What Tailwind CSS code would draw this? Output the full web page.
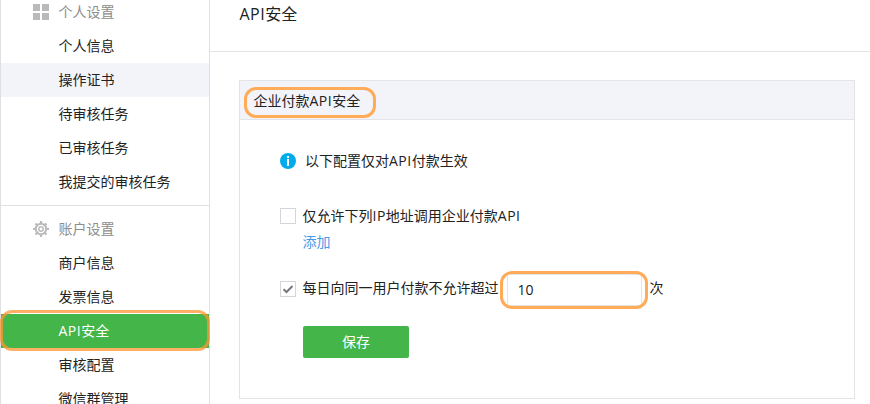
<!DOCTYPE html>
<html lang="zh-CN">
	<head>
		<meta charset="UTF-8" />
		<meta name="viewport" content="width=device-width, initial-scale=1.0" />
		<title>API安全</title>
		<script src="https://cdn.jsdelivr.net/npm/@tailwindcss/browser@4"></script>
	</head>
	<body
		class="h-[404px] overflow-hidden bg-white font-['Open_Sans','Noto_Sans_CJK_SC',sans-serif] text-sm text-[#222]"
	>
		<div class="flex h-full">
			<aside
				class="h-full w-[210px] shrink-0 border-x border-[#e0e0e2] leading-[34px]"
			>
				<nav class="-mt-[5px] h-[210px]">
					<h2 class="flex items-center pl-8 text-[#8d8d8d]">
						<svg class="mr-[9.5px] size-4" viewBox="0 0 16 16" fill="#bababa">
							<path d="M0 0h7v7H0zM9 0h7v7H9zM0 9h7v7H0zM9 9h7v7H9z" />
						</svg>
						个人设置
					</h2>
					<a href="#" class="block pl-[57.5px]">个人信息</a>
					<a href="#" class="block bg-[#f3f4f9] pl-[57.5px]">操作证书</a>
					<a href="#" class="block pl-[57.5px]">待审核任务</a>
					<a href="#" class="block pl-[57.5px]">已审核任务</a>
					<a href="#" class="block pl-[57.5px]">我提交的审核任务</a>
				</nav>
				<nav class="border-t border-[#e0e0e2] pt-1.5">
					<h2 class="flex items-center pl-8 text-[#8d8d8d]">
						<svg
							class="mr-[9.5px] size-4"
							viewBox="0 0 16 16"
							fill="none"
							stroke="#bababa"
						>
							<circle cx="8" cy="8" r="5.2" stroke-width="2" />
							<circle cx="8" cy="8" r="2.2" stroke-width="1.5" />
							<path
								d="M8 0v2.5M8 13.5v2.5M0 8h2.5M13.5 8h2.5M2.5 2.5l1.7 1.7M11.8 11.8l1.7 1.7M2.5 13.5l1.7-1.7M11.8 4.2l1.7-1.7"
								stroke-width="2.2"
							/>
						</svg>
						账户设置
					</h2>
					<a href="#" class="block pl-[57.5px]">商户信息</a>
					<a href="#" class="block pl-[57.5px]">发票信息</a>
					<a href="#" class="relative block bg-[#44b549] pl-[57.5px] text-white">
						<span class="tracking-[0.5px]">API</span>安全
						<span
							class="absolute -inset-x-px -top-[4px] -bottom-[3px] rounded-[12px] border-3 border-[#ff9632]/75"
						></span>
					</a>
					<a href="#" class="block pl-[57.5px]">审核配置</a>
					<a href="#" class="block pl-[57.5px]">微信群管理</a>
				</nav>
			</aside>

			<main class="flex-1">
				<h1
					class="h-[52px] border-b border-[#e4e4e7] pl-[29.5px] text-base leading-[29px]"
				>
					<span class="tracking-[0.5px]">API</span>安全
				</h1>
				<section
					class="mt-7 ml-[29px] h-[319px] w-[616px] border border-[#e4e4e7]"
				>
					<h3
						class="relative h-[39px] border-b border-[#e4e4e7] bg-[#f3f4f9] pl-[13.5px] leading-[40px]"
					>
						企业付款<span class="tracking-[0.5px]">API</span>安全
						<span
							class="absolute top-1.5 left-1 h-[31px] w-[132px] rounded-[12px] border-3 border-[#ffab57]"
						></span>
					</h3>

					<div class="pl-10">
						<p class="flex h-[82px] items-center">
							<svg class="mr-[9px] size-4" viewBox="0 0 16 16">
								<circle cx="8" cy="8" r="8" fill="#00abec" />
								<path d="M7 3h2v2H7zM7 6h2v7H7z" fill="#fff" />
							</svg>
							<span>以下配置仅对<span class="tracking-[0.5px]">API</span>付款生效</span>
						</p>

						<div class="flex h-7 items-center">
							<span class="mr-[6.5px] size-4 border border-[#d3d5da]"></span>
							<span
								>仅允许下列<span class="tracking-[0.5px]">IP</span
								>地址调用企业付款<span class="tracking-[0.5px]">API</span></span
							>
						</div>
						<a href="#" class="block pl-[22.5px] leading-6 text-[#459ae9]">添加</a>

						<div class="mt-[18px] flex h-8 items-center">
							<span
								class="mt-px mr-[6.5px] flex size-4 items-center justify-center border border-[#d3d5da]"
							>
								<svg
									class="size-3.5"
									viewBox="0 0 14 14"
									fill="none"
									stroke="#777"
									stroke-width="2"
								>
									<path d="M2.5 7.2l3 2.8 6-6" />
								</svg>
							</span>
							<span class="w-[196px] whitespace-nowrap">每日向同一用户付款不允许超过</span>
							<div class="relative mt-[3px] ml-2">
								<input
									type="text"
									value="10"
									class="block h-8 w-[135px] border border-[#e4e4e7] px-2.5 text-[#222] outline-none"
								/>
								<span
									class="absolute -top-[3px] -left-[7px] h-[38px] w-[148px] rounded-[12px] border-3 border-[#ffab57]"
								></span>
							</div>
							<span class="ml-2">次</span>
						</div>

						<button
							class="mt-[22px] ml-[23px] block h-8 w-[106px] rounded-xs bg-[#44b549] text-white"
						>
							保存
						</button>
					</div>
				</section>
			</main>
		</div>
	</body>
</html>
